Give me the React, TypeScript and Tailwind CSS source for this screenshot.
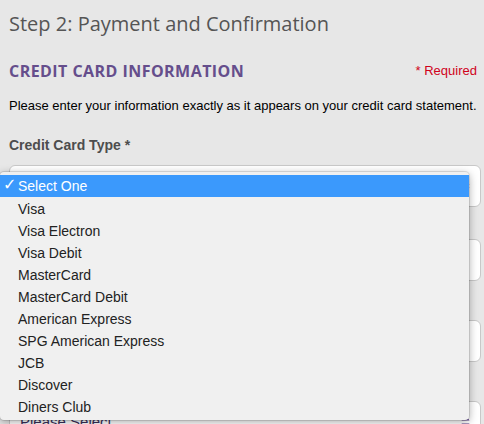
const cardTypes = [
    'Select One',
    'Visa',
    'Visa Electron',
    'Visa Debit',
    'MasterCard',
    'MasterCard Debit',
    'American Express',
    'SPG American Express',
    'JCB',
    'Discover',
    'Diners Club',
]

function SelectArrows() {
    return (
        <svg width="9" height="16" viewBox="0 0 9 16" className="text-[#5b3f8c]">
            <path d="M4.5 1 L8.5 6.5 H0.5 Z" fill="currentColor" />
            <path d="M4.5 15 L8.5 9.5 H0.5 Z" fill="currentColor" />
        </svg>
    )
}

export default function App() {
    return (
        <div className="relative h-[424px] w-[484px] overflow-hidden bg-[#e7e7e7] font-['Liberation_Sans',Arial,sans-serif]">
            <div className="pl-[9px] pr-[7px] pt-[10px]">
                {/* Page heading */}
                <h1 className="font-['Open_Sans',sans-serif] text-[20px] leading-[28px] text-[#555555]">
                    Step 2: Payment and Confirmation
                </h1>

                <div className="mt-[22px] flex items-center justify-between">
                    <h2 className="font-['Open_Sans',sans-serif] text-[16px] font-bold leading-[22px] tracking-[0.45px] text-[#654e8c]">
                        CREDIT CARD INFORMATION
                    </h2>
                    <span className="text-[13px] text-[#d0021b]">* Required</span>
                </div>

                <p className="mt-[15px] text-[13px] leading-[18px] text-black">
                    Please enter your information exactly as it appears on your credit card statement.
                </p>

                {/* Form fields (mostly hidden under the open menu) */}
                <div className="mt-[21px] flex flex-col">
                    <label className="text-[14px] font-bold leading-[18px] text-[#4d4d4d]">Credit Card Type *</label>
                    <div className="mt-[11px] flex h-[42px] w-[472px] items-center justify-between rounded-[6px] border border-[#c8c8c8] bg-white px-[10px]">
                        <span className="text-[13px] text-[#333]">Select One</span>
                        <SelectArrows />
                    </div>

                    <label className="mt-[14px] text-[14px] font-bold leading-[18px] text-[#4d4d4d]">Name on Card *</label>
                    <div className="h-[42px] w-[472px] rounded-[6px] border border-[#c8c8c8] bg-white" />

                    <label className="mt-[21px] text-[14px] font-bold leading-[18px] text-[#4d4d4d]">Card Number *</label>
                    <div className="h-[42px] w-[472px] rounded-[6px] border border-[#c8c8c8] bg-white" />

                    <label className="mt-[21px] text-[14px] font-bold leading-[18px] text-[#4d4d4d]">Expiration Month *</label>
                    <div className="flex h-[42px] w-[472px] items-center justify-between rounded-[6px] border border-[#c8c8c8] bg-white px-[10px]">
                        <span className="text-[15px] text-[#3a2f5b]">Please Select</span>
                        <SelectArrows />
                    </div>
                </div>
            </div>

            {/* Open native select menu */}
            <ul className="absolute left-0 top-[172px] w-[469px] rounded-[4px] bg-[#f0f0f0] pb-[3px] pt-[3px] shadow-[0_2px_8px_rgba(0,0,0,0.35)] ring-1 ring-black/10">
                {cardTypes.map((t, i) => (
                    <li
                        key={t}
                        className={
                            i === 0
                                ? 'relative flex h-[22px] items-center bg-[#3b99fc] pl-[18px] text-[14px] text-white'
                                : 'relative flex h-[22px] items-center pl-[18px] pt-[2px] text-[14px] text-[#222]'
                        }
                    >
                        {i === 0 && (
                            <span className="absolute left-[3px] top-[0px] font-['DejaVu_Sans',sans-serif] text-[16px] leading-[20px]">✓</span>
                        )}
                        {t}
                    </li>
                ))}
            </ul>
        </div>
    )
}
